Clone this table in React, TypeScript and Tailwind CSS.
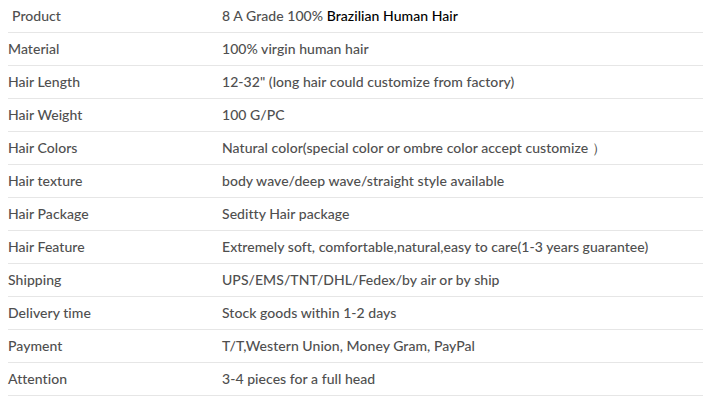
const rows: [string, React.ReactNode][] = [
  [
    "Product",
    <>
      8 A Grade 100% <span className="text-black">Brazilian Human Hair</span>
    </>,
  ],
  ["Material", "100% virgin human hair"],
  ["Hair Length", "12-32\" (long hair could customize from factory)"],
  ["Hair Weight", "100 G/PC"],
  ["Hair Colors", "Natural color(special color or ombre color accept customize \uFF09"],
  ["Hair texture", "body wave/deep wave/straight style available"],
  ["Hair Package", "Seditty Hair package"],
  ["Hair Feature", "Extremely soft, comfortable,natural,easy to care(1-3 years guarantee)"],
  ["Shipping", "UPS/EMS/TNT/DHL/Fedex/by air or by ship"],
  ["Delivery time", "Stock goods within 1-2 days"],
  ["Payment", "T/T,Western Union, Money Gram, PayPal"],
  ["Attention", "3-4 pieces for a full head"],
];

export default function App() {
  return (
    <div className="w-[703px] h-[417px] bg-white pl-2 font-['Lato','Liberation_Sans',sans-serif] text-[14px] font-medium tracking-[0.05px] text-[#4f4f4f]">
      {rows.map(([label, value], i) => (
        <div key={i} className="flex h-[33px] items-center pb-[2px] border-b border-[#e6e6e6]">
          <div className={`w-[214px] shrink-0 ${i === 0 ? "pl-1" : ""}`}>{label}</div>
          <div className="whitespace-nowrap">{value}</div>
        </div>
      ))}
    </div>
  );
}
